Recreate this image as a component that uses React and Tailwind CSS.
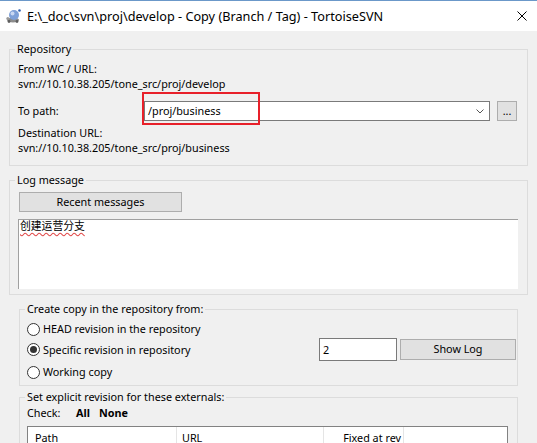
import React from "react";

const ui = "font-['Noto_Sans','Noto_Sans_CJK_SC',sans-serif]";

const Group = ({ title, className, children }) => (
    <fieldset className={`border border-[#dcdcdc] ${className}`}>
        <legend className="ml-[5px] px-[2px] leading-[14px]">{title}</legend>
        {children}
    </fieldset>
);

const Button = ({ className, children }) => (
    <div className={`flex items-center justify-center bg-[#e1e1e1] border border-[#adadad] ${className}`}>
        {children}
    </div>
);

const Radio = ({ checked, label }) => (
    <div className="flex items-center">
        <span className="w-[13px] h-[13px] rounded-full border border-[#333] bg-white flex items-center justify-center">
            {checked && <span className="w-[7px] h-[7px] rounded-full bg-[#333]" />}
        </span>
        <span className="ml-[3px] leading-[14px]">{label}</span>
    </div>
);

const TortoiseIcon = () => (
    <svg width="16" height="16" viewBox="0 0 16 16">
        <ellipse cx="7" cy="12" rx="6" ry="2.5" fill="#8c8c8c" />
        <circle cx="3" cy="13.5" r="1.4" fill="#5e5e5e" />
        <circle cx="11" cy="13.5" r="1.4" fill="#5e5e5e" />
        <circle cx="8" cy="7" r="5" fill="#7ea1d8" />
        <circle cx="6.5" cy="5.5" r="2" fill="#c8d8f2" />
        <circle cx="13.5" cy="2.5" r="1.3" fill="#2f5fb0" />
        <circle cx="1.8" cy="10.5" r="1.5" fill="#9a9a9a" />
    </svg>
);

export default function App() {
    return (
        <div className={`w-[537px] h-[443px] overflow-hidden bg-[#f0f0f0] text-[10.8px] text-black ${ui}`}>
            {/* title bar */}
            <div className="h-[31px] bg-white border-t border-[#6b98c9] flex items-center">
                <div className="ml-[6px] w-[16px] h-[16px]"><TortoiseIcon /></div>
                <span className="ml-[5px] text-[12.7px] leading-[16px]">E:\_doc\svn\proj\develop - Copy (Branch / Tag) - TortoiseSVN</span>
                <svg className="ml-auto mr-[10px]" width="10" height="10" viewBox="0 0 10 10">
                    <path d="M0.5 0.5 L9.5 9.5 M9.5 0.5 L0.5 9.5" stroke="#000" strokeWidth="1" />
                </svg>
            </div>

            <div className="pl-[9px]">
                {/* Repository */}
                <Group title="Repository" className="mt-[11px] w-[519px]">
                    <div className="pl-[8px] pr-[10px] pt-[6px] pb-[10px]">
                        <div className="leading-[14px]">From WC / URL:</div>
                        <div className="mt-px leading-[14px]">svn://10.10.38.205/tone_src/proj/develop</div>
                        <div className="mt-[10px] h-[20px] flex items-center">
                            <span className="w-[126px] leading-[14px]">To path:</span>
                            <div className="relative w-[346px] h-[20px] bg-white border border-[#7a7a7a] flex items-center">
                                <span className="pl-[3px] leading-[14px]">/proj/business</span>
                                <svg className="ml-auto mr-[5px]" width="8" height="5" viewBox="0 0 8 5">
                                    <path d="M0.5 0.5 L4 4 L7.5 0.5" stroke="#555" strokeWidth="1" fill="none" />
                                </svg>
                                <div className="absolute -left-[3px] -top-[10px] w-[118px] h-[33px] border-2 border-[#e8202a]" />
                            </div>
                            <Button className="ml-[7px] w-[20px] h-[20px] leading-[10px]">...</Button>
                        </div>
                        <div className="mt-[5px] leading-[14px]">Destination URL:</div>
                        <div className="mt-px leading-[14px]">svn://10.10.38.205/tone_src/proj/business</div>
                    </div>
                </Group>

                {/* Log message */}
                <Group title="Log message" className="mt-[7px] w-[519px]">
                    <div className="pl-[8px] pt-[5px] pb-[5px]">
                        <Button className="ml-px w-[163px] h-[20px]">Recent messages</Button>
                        <div className="mt-[7px] w-[500px] h-[70px] bg-white border-t border-l border-[#a0a0a0] pl-px leading-[12px]">
                            <span className="underline decoration-wavy decoration-[#e04848] underline-offset-2">创建运营分支</span>
                        </div>
                    </div>
                </Group>

                {/* Create copy */}
                <Group title="Create copy in the repository from:" className="ml-[10px] mt-[7px] w-[499px]">
                    <div className="pl-[7px] pr-px pt-[6px] pb-[6px]">
                        <div className="h-[14px] flex items-center">
                            <Radio label="HEAD revision in the repository" />
                        </div>
                        <div className="mt-[2px] h-[23px] flex items-center">
                            <Radio checked label="Specific revision in repository" />
                            <div className="ml-auto w-[78px] h-[23px] bg-white border border-[#7a7a7a] pl-[3px] flex items-center leading-[14px]">2</div>
                            <Button className="ml-[3px] w-[116px] h-[21px]">Show Log</Button>
                        </div>
                        <div className="mt-[4px] h-[14px] flex items-center">
                            <Radio label="Working copy" />
                        </div>
                    </div>
                </Group>

                {/* Externals */}
                <Group title="Set explicit revision for these externals:" className="ml-[10px] mt-[4px] w-[499px]">
                    <div className="pl-[7px] pt-[2px]">
                        <div className="h-[14px] flex items-center leading-[14px]">
                            <span className="w-[49px]">Check:</span>
                            <span className="w-[23px] font-bold">All</span>
                            <span className="font-bold">None</span>
                        </div>
                        <div className="mt-[6px] w-[481px] bg-white border border-[#828282] leading-[12px]">
                            <div className="h-[22px] flex">
                                <div className="w-[149px] pl-[7px] flex items-center border-r border-[#e5e5e5]">Path</div>
                                <div className="w-[147px] pl-[5px] flex items-center border-r border-[#e5e5e5]">URL</div>
                                <div className="w-[80px] pr-[2px] flex items-center justify-end border-r border-[#e5e5e5]">Fixed at rev</div>
                                <div className="flex-1" />
                            </div>
                        </div>
                    </div>
                </Group>
            </div>
        </div>
    );
}
